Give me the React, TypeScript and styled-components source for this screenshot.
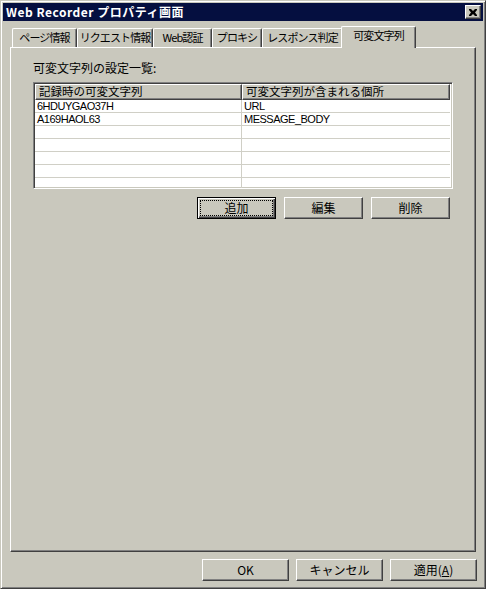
import React from 'react';
import styled, { createGlobalStyle } from 'styled-components';

const FACE = '#c9c8bd';
const SHADOW = '#808080';
const DARK = '#404040';
const GRID = '#d0cfc6';

const GlobalStyle = createGlobalStyle`
  html, body {
    margin: 0;
    padding: 0;
    background: ${FACE};
  }
  body {
    font-family: "Noto Sans CJK JP", "Liberation Sans", sans-serif;
    font-size: 12px;
    color: #000;
  }
`;

const Window = styled.div`
  width: 486px;
  height: 589px;
  box-sizing: border-box;
  background: ${FACE};
  border: 1px solid;
  border-color: ${FACE} ${DARK} ${DARK} ${FACE};
  box-shadow: inset 1px 1px #fff, inset -1px -1px ${SHADOW};
  padding: 2px;
  display: flex;
  flex-direction: column;
`;

const TitleBar = styled.div`
  height: 18px;
  flex-shrink: 0;
  background: #050f40;
  display: flex;
  align-items: center;
  justify-content: space-between;
  padding: 0 2px 0 3px;
`;

const Title = styled.span`
  color: #fff;
  font-weight: bold;
  font-size: 12px;
  line-height: 18px;
  letter-spacing: 0.5px;
`;

const CloseButton = styled.div`
  width: 16px;
  height: 14px;
  box-sizing: border-box;
  background: ${FACE};
  border: 1px solid;
  border-color: #fff ${DARK} ${DARK} #fff;
  box-shadow: inset -1px -1px ${SHADOW};
  display: flex;
  align-items: center;
  justify-content: center;
`;

const TabStrip = styled.div`
  margin: 5px 7px 0;
  padding-left: 2px;
  height: 21px;
  flex-shrink: 0;
  display: flex;
  align-items: flex-end;
  position: relative;
  z-index: 1;
`;

const Tab = styled.div<{ $w: number; $selected?: boolean }>`
  width: ${(p) => p.$w + (p.$selected ? 4 : 0)}px;
  height: ${(p) => (p.$selected ? 22 : 19)}px;
  margin: ${(p) => (p.$selected ? '0 -2px -1px' : '0')};
  box-sizing: border-box;
  background: ${FACE};
  border-top: 1px solid #fff;
  border-left: 1px solid #fff;
  border-right: 1px solid ${DARK};
  box-shadow: inset -1px 0 ${SHADOW};
  border-radius: 2px 2px 0 0;
  position: relative;
  z-index: ${(p) => (p.$selected ? 2 : 1)};
  font-size: 11px;
  letter-spacing: -0.9px;
  line-height: ${(p) => (p.$selected ? 16 : 17)}px;
  text-align: center;
  white-space: nowrap;
`;

const Panel = styled.div`
  flex: 1;
  margin: 0 7px;
  box-sizing: border-box;
  border: 1px solid;
  border-color: #fff ${DARK} ${DARK} #fff;
  box-shadow: inset -1px -1px ${SHADOW};
  padding: 13px 0 0 22px;
  display: flex;
  flex-direction: column;
`;

const SectionLabel = styled.div`
  font-size: 12px;
  line-height: 14px;
  margin-bottom: 7px;
`;

const ListView = styled.div`
  width: 420px;
  height: 107px;
  box-sizing: border-box;
  background: #fff;
  border: 1px solid;
  border-color: ${SHADOW} #fff #fff ${SHADOW};
  box-shadow: inset 1px 1px ${DARK}, inset -1px -1px ${FACE};
  padding: 1px 2px 2px 1px;
  overflow: hidden;
  display: flex;
  flex-direction: column;
`;

const Columns = styled.div`
  display: grid;
  grid-template-columns: 207px 1fr;
`;

const HeaderCell = styled.div`
  height: 16px;
  box-sizing: border-box;
  background: ${FACE};
  border: 1px solid;
  border-color: #fff ${DARK} ${DARK} #fff;
  box-shadow: inset -1px -1px ${SHADOW};
  padding-left: 3px;
  font-size: 11.5px;
  line-height: 13px;
  white-space: nowrap;
  overflow: hidden;
`;

const Cell = styled.div<{ $first?: boolean }>`
  height: 13px;
  box-sizing: border-box;
  border-bottom: 1px solid ${GRID};
  border-right: ${(p) => (p.$first ? `1px solid ${GRID}` : 'none')};
  padding-left: 2px;
  font-family: "Liberation Sans", sans-serif;
  font-size: 11px;
  letter-spacing: -0.5px;
  line-height: 12px;
  white-space: nowrap;
`;

const ButtonRow = styled.div<{ $gap: number }>`
  display: flex;
  justify-content: flex-end;
  gap: ${(p) => p.$gap}px;
`;

const ListButtons = styled(ButtonRow)`
  width: 420px;
  padding-right: 3px;
  box-sizing: border-box;
  margin-top: 8px;
`;

const Footer = styled(ButtonRow)`
  margin: 7px 6px 5px;
  flex-shrink: 0;
`;

const Button = styled.button<{ $w: number; $default?: boolean }>`
  width: ${(p) => p.$w}px;
  height: 22px;
  box-sizing: border-box;
  background: ${FACE};
  font-family: "Noto Sans CJK JP", "Liberation Sans", sans-serif;
  font-size: 12px;
  color: #000;
  border: 1px solid;
  border-color: ${(p) => (p.$default ? '#000' : `#fff ${DARK} ${DARK} #fff`)};
  box-shadow: ${(p) =>
    p.$default
      ? `inset 1px 1px #fff, inset -1px -1px ${DARK}, inset -2px -2px ${SHADOW}`
      : `inset -1px -1px ${SHADOW}`};
  display: flex;
  align-items: center;
  justify-content: center;
  padding: 3px;
`;

const ButtonFace = styled.span<{ $focused?: boolean }>`
  flex: 1;
  align-self: stretch;
  display: flex;
  align-items: center;
  justify-content: center;
  line-height: 14px;
  outline: ${(p) => (p.$focused ? '1px dotted #000' : 'none')};
`;

const tabs = [
  { label: 'ページ情報', w: 65 },
  { label: 'リクエスト情報', w: 76 },
  { label: 'Web認証', w: 59 },
  { label: 'プロキシ', w: 50 },
  { label: 'レスポンス判定', w: 81 },
  { label: '可変文字列', w: 71, selected: true },
];

const rows: [string, string][] = [
  ['6HDUYGAO37H', 'URL'],
  ['A169HAOL63', 'MESSAGE_BODY'],
  ['', ''],
  ['', ''],
  ['', ''],
  ['', ''],
  ['', ''],
];

const App: React.FC = () => (
  <>
    <GlobalStyle />
    <Window>
      <TitleBar>
        <Title>Web Recorder プロパティ画面</Title>
        <CloseButton>
          <svg width="8" height="7" viewBox="0 0 8 7">
            <path d="M0 0h2l2 2 2-2h2v1L6 3.5 8 6v1H6L4 5 2 7H0V6l2-2.5L0 1z" fill="#000" />
          </svg>
        </CloseButton>
      </TitleBar>

      <TabStrip>
        {tabs.map((t) => (
          <Tab key={t.label} $w={t.w} $selected={t.selected}>
            {t.label}
          </Tab>
        ))}
      </TabStrip>

      <Panel>
        <SectionLabel>可変文字列の設定一覧:</SectionLabel>
        <ListView>
          <Columns>
            <HeaderCell>記録時の可変文字列</HeaderCell>
            <HeaderCell>可変文字列が含まれる個所</HeaderCell>
            {rows.map(([a, b], i) => (
              <React.Fragment key={i}>
                <Cell $first>{a}</Cell>
                <Cell>{b}</Cell>
              </React.Fragment>
            ))}
          </Columns>
        </ListView>
        <ListButtons $gap={8}>
          <Button $w={79} $default>
            <ButtonFace $focused>追加</ButtonFace>
          </Button>
          <Button $w={79}>
            <ButtonFace>編集</ButtonFace>
          </Button>
          <Button $w={79}>
            <ButtonFace>削除</ButtonFace>
          </Button>
        </ListButtons>
      </Panel>

      <Footer $gap={7}>
        <Button $w={87}>
          <ButtonFace>OK</ButtonFace>
        </Button>
        <Button $w={87}>
          <ButtonFace>キャンセル</ButtonFace>
        </Button>
        <Button $w={87}>
          <ButtonFace>
            適用(<u>A</u>)
          </ButtonFace>
        </Button>
      </Footer>
    </Window>
  </>
);

export default App;
